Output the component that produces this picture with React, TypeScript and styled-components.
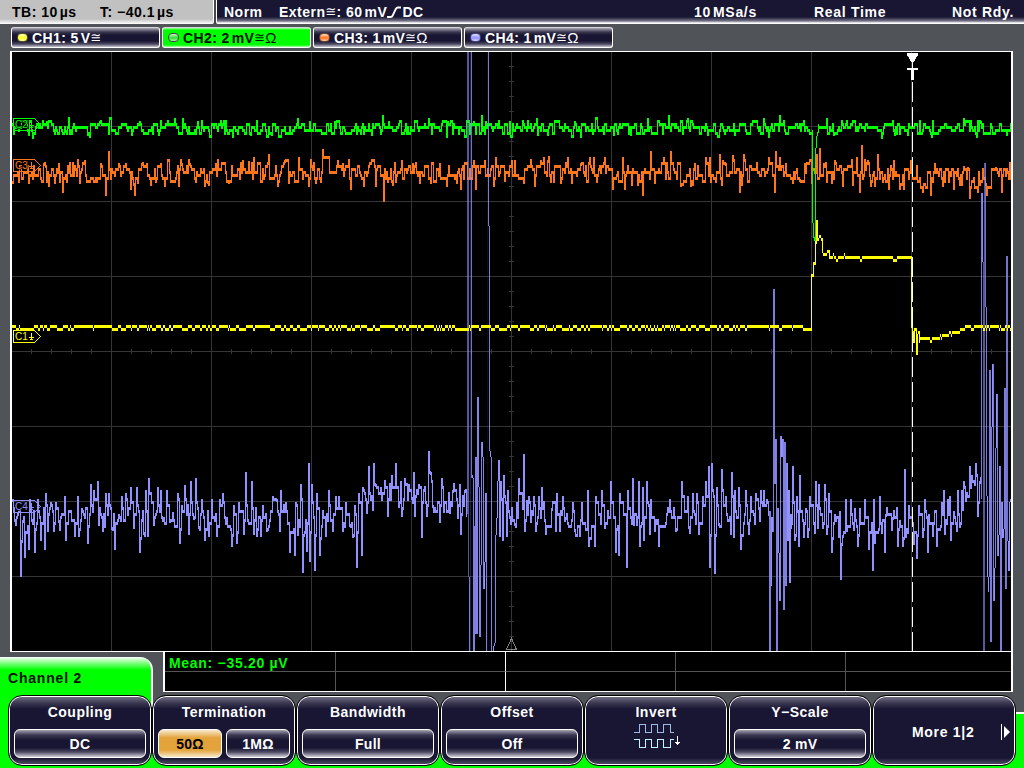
import React from "react";
import styled, { createGlobalStyle, css } from "styled-components";

const GREEN = "#00ff00";
const ORANGE = "#ff751a";
const YELLOW = "#ffff00";
const VIOLET = "#9191ff";
const NAVY = "#191633";
const GREY = "#505458";

const GlobalStyle = createGlobalStyle`
  * { box-sizing: border-box; }
  body { margin: 0; background: ${GREY}; overflow: hidden; }
`;

/* ---------- trace data ---------- */

const LEFT = 12;
const RIGHT = 1011;
const TOP = 52;
const BOTTOM = 651;

type Point = [number, number];
type Span = [number, number, number, number?];

const parse = (text: string): Point[] =>
  text.trim().split(/\s+/).map((p) => p.split(":").map(Number) as Point);

const randomFrom = (seed: number) => () => {
  seed = (seed * 1664525 + 1013904223) % 4294967296;
  return seed / 4294967296;
};

const CH4_PEAKS = parse(`
13:499 16:526 21:577 23:523 25:558 29:550 30:499 32:522 35:553 38:499 41:541 45:550 46:493 48:532 51:502 54:532 56:502
59:523 65:496 66:541 69:510 75:537 78:496 79:537 82:508 88:544 91:484 94:490 98:481 99:526 103:532 106:493 109:493 112:530
115:550 119:514 122:496 126:493 128:513 131:487 134:529 137:487 140:553 144:535 146:490 148:537 149:478 151:492 154:526
158:487 161:490 164:520 167:490 170:523 173:512 178:493 180:544 182:505 185:485 189:535 191:481 194:520 196:478 199:529
202:499 205:541 209:537 212:499 217:537 220:499 223:493 227:520 232:547 234:505 237:544 239:502 244:535 246:472 248:522
252:481 254:535 257:537 261:537 263:505 267:532 270:522 273:496 277:499 280:532 281:490 286:502 290:553 295:556 296:502
298:536 301:484 303:573 307:552 309:463 310:562 312:484 315:571 317:493 320:556 323:510 326:537 329:490 333:532 336:496
339:496 343:532 346:502 350:527 353:538 355:505 357:568 359:493 362:556 363:487 367:514 369:466 373:511 374:463 376:484
381:487 385:480 388:517 390:483 392:475 396:463 399:508 401:481 402:517 405:478 409:484 412:500 414:472 415:517 419:484
422:538 424:489 427:517 429:451 431:472 433:508 440:523 442:478 444:513 450:514 453:490 458:519 460:484 461:535 465:490
467:514 499:460 500:537 501:481 503:541 504:475 507:537 508:490 511:525 515:526 517:502 519:478 524:454 525:532 527:500
529:496 531:523 534:496 536:532 539:496 542:487 546:535 552:508 556:532 557:493 560:532 563:496 566:520 575:532 573:502
580:537 582:502 583:525 588:490 589:547 595:547 596:496 602:490 605:529 608:510 611:481 616:553 619:556 620:493 627:568
628:490 633:478 634:526 637:526 639:481 640:547 643:487 644:541 647:481 650:535 651:499 655:532 659:547 670:499 676:532
682:481 689:529 688:496 693:493 697:493 699:535 703:496 706:481 709:466 710:568 712:463 715:574 717:487 719:526 722:469
726:496 731:535 732:472 734:538 735:490 739:487 741:550 746:490 749:535 751:496 756:493 761:490 764:490 767:499 793:466
795:541 797:496 799:547 800:475 804:538 806:508 808:538 810:496 816:481 818:529 819:484 823:529 825:484 827:535 829:493
832:553 835:514 839:538 840:511 841:580 843:538 846:499 847:532 851:499 855:508 858:547 860:508 865:499 869:550 873:571
874:499 875:544 880:496 885:553 886:514 893:517 898:547 900:520 903:547 905:469 906:538 909:505 914:545 917:559 919:505
923:538 925:499 928:553 929:514 937:547 942:502 944:490 945:535 948:499 950:496 951:541 954:511 957:532 958:490 962:490
963:511 964:481 966:502 970:466 972:475 976:463 978:517 980:481`);

const CH3_PEAKS = parse(`
13:184 19:183 29:184 41:180 44:163 49:187 55:184 63:193 59:163 70:162 73:162 85:160 80:184 90:183 97:183 101:163 106:196
109:151 119:163 126:163 131:190 135:196 138:184 142:163 147:163 151:186 161:163 165:187 171:183 179:187 182:163 190:163
205:187 208:184 216:163 229:184 243:160 249:161 254:157 269:154 278:187 285:160 289:184 299:157 309:187 316:184 323:149
338:160 343:163 351:190 364:187 376:187 384:202 392:183 402:160 413:163 420:184 431:184 440:163 447:187 457:184 461:190
474:160 476:190 485:160 494:187 496:157 505:182 512:160 515:160 524:184 535:187 541:160 544:157 548:160 561:184 568:157
572:184 581:163 590:157 594:157 597:183 605:157 613:190 623:157 625:190 638:186 643:196 651:151 655:184 664:157 671:151
681:187 691:187 695:163 706:157 710:157 716:183 720:154 723:160 726:163 733:155 740:193 744:154 748:183 769:157 775:193
776:151 780:157 786:163 793:184 800:182 805:163 812:184 817:154 820:148 824:163 832:184 835:160 843:187 853:186 857:157
860:193 862:145 868:160 871:187 875:187 878:154 889:190 894:160 900:190 904:190 911:160 923:193 931:196 935:163 943:187
954:190 964:166 970:199 968:167 978:193 987:196 996:167 1002:193 1007:168 1010:162`);

const CH2_PEAKS = parse(`
29:136 33:139 47:121 66:133 88:136 100:121 132:136 140:121 159:136 175:118 183:118 198:121 225:135 251:136 272:136 298:118
310:121 335:121 372:136 383:115 389:121 429:118 448:121 474:121 482:115 486:121 510:121 537:118 538:136 548:136 575:121
614:136 631:136 648:118 669:115 688:118 708:136 735:136 764:118 780:115 827:118 834:136 882:139 895:136 908:136 964:118
981:121 1007:136`);

interface Noise {
  peaks: Point[];
  centre: (x: number) => number;
  swing: number;
  change: number;
  drag: number;
  seed: number;
}

/* Samples between the measured peaks wander around the centre in 3px steps. */
const makeSeries = ({ peaks, centre, swing, change, drag, seed }: Noise): number[] => {
  const random = randomFrom(seed);
  const peakAt = new Map(peaks.map(([x, y]) => [x - 1, y > centre(x) ? y - 3 : y]));
  const series: number[] = [];
  let value = centre(LEFT);
  for (let x = LEFT; x < RIGHT; x++) {
    const peak = peakAt.get(x);
    if (peak !== undefined) value = peak;
    else if (peakAt.has(x - 1) || random() < change) {
      const target = centre(x) + (random() + random() - 1) * swing;
      value = Math.round((target * (1 - drag) + value * drag) / 3) * 3;
    }
    series.push(value);
  }
  return series;
};

const spansOf = (series: number[], skip: [number, number][] = []): Span[] =>
  series
    .map((y, i): Span => {
      const before = series[Math.max(0, i - 1)];
      return [LEFT + i, Math.min(y, before), Math.max(y, before) + 3];
    })
    .filter(([x]) => !skip.some(([from, to]) => x >= from && x <= to));

const pathOf = (spans: Span[]) =>
  spans.map(([x, top, bottom]) => `M${x} ${top}h1V${bottom}h-1z`).join("");

const ch2 = spansOf(
  makeSeries({ peaks: CH2_PEAKS, centre: () => 126.5, swing: 9, change: 0.6, drag: 0, seed: 11 }),
  [[812, 818]]
).concat([
  [812, 130, 223], [813, 223, 238], [814, 237, 241], [815, 148, 241], [816, 136, 148], [817, 132, 136], [818, 124, 133],
]);

const ch3 = spansOf(
  makeSeries({
    peaks: CH3_PEAKS,
    centre: (x) => (x > 911 ? 175 : 171),
    swing: 15,
    change: 0.62,
    drag: 0.15,
    seed: 29,
  })
);

const ch1Steps = parse(`
811:274 813:262 815:241 816:220 817:238 819:235 821:238 822:250 823:253 827:250 829:256 833:253 834:256 836:259 838:256
844:253 845:256 860:259 862:256 893:259 897:256 911:325 912:331 913:340 914:328 916:352 917:334 918:331 919:340 920:337
930:340 932:337 940:334 941:337 942:334 949:331 951:334 952:331 960:328`);

const ch1 = (() => {
  const random = randomFrom(7);
  const steps = new Map(ch1Steps);
  const series: number[] = [];
  let value = 325;
  for (let x = LEFT; x < RIGHT; x++) {
    if (steps.has(x)) value = steps.get(x)!;
    else if (x < 811 || x > 962) {
      if (random() < (value === 325 ? 0.2 : 0.3)) value = value === 325 ? 328 : 325;
    }
    series.push(value);
  }
  return series.map((y, i): Span => {
    const before = series[Math.max(0, i - 1)];
    if (Math.abs(y - before) <= 3) return [LEFT + i, y, y + 3];
    return [LEFT + i, Math.min(y, before), Math.max(y, before) + 3];
  });
})();

const BURSTS: Span[] = [
  [467, 52, 514, 0.6], [468, 52, 577, 0.6], [469, 577, 651, 0.85], [470, 52, 651, 0.22], [471, 52, 478, 0.78],
  [472, 475, 478], [473, 478, 651, 0.88], [474, 526, 651, 0.88], [475, 457, 634, 0.88], [476, 457, 634, 0.9],
  [477, 397, 634, 0.9], [478, 397, 487, 0.9], [479, 487, 637, 0.9], [480, 565, 637, 0.9], [481, 442, 565, 0.9],
  [482, 442, 457], [483, 457, 589, 0.9], [484, 562, 589], [485, 493, 562], [486, 493, 651, 0.88], [487, 52, 651, 0.08],
  [488, 52, 226, 0.85], [489, 226, 451, 0.85], [490, 451, 457], [491, 457, 651, 0.88], [493, 646, 651], [494, 643, 646],
  [495, 535, 643, 0.9], [496, 518, 535], [497, 481, 518], [498, 460, 481],
  [769, 511, 651, 0.88], [770, 511, 651, 0.88], [771, 517, 586], [772, 517, 532], [773, 289, 532, 0.85],
  [774, 289, 484, 0.85], [775, 439, 484, 0.9], [776, 439, 651, 0.88], [777, 508, 651, 0.88], [778, 508, 553],
  [779, 553, 601], [780, 436, 601, 0.9], [781, 436, 457], [782, 439, 457], [783, 439, 610, 0.88], [784, 442, 610, 0.88],
  [785, 442, 586, 0.88], [786, 463, 586, 0.9], [787, 463, 541], [788, 490, 541], [789, 490, 583], [790, 514, 583],
  [791, 514, 529], [981, 193, 499, 0.85], [982, 193, 262, 0.95], [983, 262, 651, 0.6], [984, 163, 651, 0.6],
  [985, 163, 307, 0.78], [986, 307, 496, 0.85], [987, 496, 577], [988, 577, 592], [989, 370, 577, 0.85],
  [990, 370, 642, 0.85], [991, 427, 642, 0.85], [992, 364, 427], [993, 364, 601, 0.85], [994, 568, 601],
  [995, 448, 568, 0.9], [996, 394, 448], [997, 394, 556, 0.88], [998, 535, 556], [999, 466, 535], [1000, 466, 651, 0.88],
  [1001, 502, 651, 0.88], [1002, 502, 538], [1003, 529, 538], [1004, 388, 529, 0.88], [1005, 388, 589, 0.85],
  [1006, 256, 589, 0.8], [1007, 256, 541, 0.8], [1008, 541, 571], [1009, 502, 571], [1010, 499, 502],
];

const ch4Centre = (x: number) => {
  if (x > 362 && x < 467) return 495;
  if (x > 960) return 490;
  if (x > 780) return 521;
  return 515;
};

const ch4 = spansOf(
  makeSeries({ peaks: CH4_PEAKS, centre: ch4Centre, swing: 22, change: 0.55, drag: 0.4, seed: 5 }),
  [[467, 498], [769, 791], [981, 1010]]
);

/* ---------- status bar ---------- */

const font = css`
  font-family: "Liberation Sans", Arial, sans-serif;
  font-size: 14px;
  font-weight: 700;
  line-height: 16px;
  white-space: pre;
`;

const Screen = styled.main`
  ${font}
  width: 1024px;
  height: 768px;
  display: flex;
  flex-direction: column;
  background: ${GREY};
  color: #fff;
  overflow: hidden;
`;

const StatusBar = styled.header`
  display: flex;
  height: 24px;
  gap: 2px;
  background: #45474d;
`;

const TimePane = styled.div`
  display: grid;
  grid-template-columns: 88px 1fr;
  width: 214px;
  padding: 4px 0 0 12px;
  color: #000;
  background: linear-gradient(#c1c1c1 19px, #fff 24px);
  border-right: 1px solid #fff;
  border-bottom-right-radius: 2px;
`;

const TriggerPane = styled.div`
  flex: 1;
  display: grid;
  grid-template-columns: 55px 415px 120px 138px 1fr;
  padding: 4px 0 0 7px;
  background: linear-gradient(${NAVY} 17px, #77758a 21px, #fff 23px);
  border-left: 1px solid #fff;
  border-bottom-left-radius: 2px;
`;

const Reading = styled.span<{ $spacing?: number }>`
  display: flex;
  letter-spacing: ${(p) => p.$spacing ?? 0.5}px;
`;

const Unit = styled.span`
  margin-left: 2px;
`;

const Approx = styled.span`
  font-family: "DejaVu Sans", sans-serif;
  font-weight: 400;
  font-size: 13px;
  letter-spacing: 0;
`;

const ThinOhm = styled.span`
  font-weight: 400;
  font-size: 15px;
  letter-spacing: 0;
`;

const EdgeGlyph = styled.svg`
  margin: 1px 0 0 -1px;
`;

const RisingEdge = () => (
  <EdgeGlyph width="16" height="14" viewBox="0 0 16 14">
    <path d="M1 12H4.5Q6 12 6.7 10.5L9.8 4Q10.5 2.5 12 2.5H15" fill="none" stroke="#fff" strokeWidth="1.8" />
  </EdgeGlyph>
);

/* ---------- channel bar ---------- */

const ChannelBar = styled.nav`
  display: flex;
  gap: 2px;
  height: 27px;
  padding: 3px 0 3px 11px;
`;

const ChannelButton = styled.div<{ $active?: boolean }>`
  display: flex;
  align-items: center;
  width: 149px;
  height: 21px;
  padding: 0 0 0 5px;
  border: 1px solid #fff;
  border-top-color: #d6d6dc;
  border-radius: 3px;
  color: ${(p) => (p.$active ? "#001000" : "#fff")};
  background: ${(p) =>
    p.$active
      ? `linear-gradient(#b0ffb0, ${GREEN} 2px, ${GREEN} 17px, #b0ffb0)`
      : `linear-gradient(#aaa9b5, #3b3850 4px, ${NAVY} 7px, ${NAVY} 13px, #4a4860 16px, #c6c5cf)`};
`;

const Lamp = styled.i<{ $color: string; $ring: string }>`
  width: 11px;
  height: 9px;
  margin-right: 4px;
  border: 1px solid ${(p) => p.$ring};
  border-radius: 4px;
  background: linear-gradient(#fff -20%, ${(p) => p.$color} 55%, #fff 130%);
`;

/* ---------- plot ---------- */

const Plot = styled.section`
  width: 1003px;
  height: 601px;
  margin-left: 10px;
  border: solid #fff;
  border-width: 1px 2px 1px 2px;
  background: #000;
  svg { display: block; }
`;

const TagText = styled.text`
  font-family: "Liberation Sans", Arial, sans-serif;
  font-size: 10px;
  font-weight: 400;
  paint-order: stroke;
`;

const ChannelTag = ({ name, y, color }: { name: string; y: number; color: string }) => (
  <g>
    <path d={`M13.5 ${y + 0.5}h21l6 6l-6 6h-21z`} fill="none" stroke={color} />
    <TagText x="15" y={y + 10} fill={color} stroke="#000" strokeWidth="1.5">
      {name}
    </TagText>
    <path d={`M31.5 ${y + 3}v6M29 ${y + 7.5}h5M30 ${y + 9.5}h3`} fill="none" stroke={color} />
  </g>
);

const range = (from: number, to: number, step: number) => {
  const out: number[] = [];
  for (let v = from; v <= to; v += step) out.push(v);
  return out;
};

const gridPath = [
  ...range(111, 911, 100).map((x) => `M${x} ${TOP}h1V${BOTTOM}h-1z`),
  ...range(126, 576, 75).map((y) => `M${LEFT} ${y}H${RIGHT}v1H${LEFT}z`),
  ...range(31, 991, 20).map((x) => `M${x} 349h1v5h-1z`),
  ...range(66, 636, 15).map((y) => `M509 ${y}h5v1h-5z`),
].join("");

const dashPath = range(82, 632, 25)
  .map((y) => `M912 ${y}h1V${Math.min(y + 20, BOTTOM)}h-1z`)
  .join("");

const Waveforms = () => (
  <svg width="999" height="599" viewBox="12 52 999 599" shapeRendering="crispEdges">
    <path d={gridPath} fill="#353535" />
    <path d="M506.5 649.5L511.5 638.5L516.5 649.5z" fill="none" stroke="#858585" />
    <path d={pathOf(ch3)} fill={ORANGE} />
    <path d={pathOf(ch2)} fill={GREEN} />
    <path d={pathOf(ch4)} fill={VIOLET} />
    {BURSTS.map(([x, top, bottom, level = 1]) => (
      <rect key={x} x={x} y={top} width="1" height={bottom - top} fill={VIOLET} opacity={level} />
    ))}
    <path d={pathOf(ch1)} fill={YELLOW} />
    <path d={dashPath} fill="#fff" />
    <path d="M907 53h11v2l-5 8v5h5v2h-4v10h-3v-10h-4v-2h5v-5l-5-8z" fill="#fff" />
    <ChannelTag name="C2" y={118} color={GREEN} />
    <ChannelTag name="C3" y={159} color={ORANGE} />
    <ChannelTag name="C1" y={330} color={YELLOW} />
    <ChannelTag name="C4" y={500} color={VIOLET} />
  </svg>
);

/* ---------- measurements ---------- */

const ResultRow = styled.section`
  display: flex;
  align-items: flex-end;
  height: 43px;
`;

const MenuTitle = styled.h2`
  ${font}
  width: 153px;
  height: 38px;
  margin: 0;
  padding: 13px 0 0 8px;
  color: #001000;
  letter-spacing: 0.8px;
  background: linear-gradient(#fff, #a8ffa8 4px, ${GREEN} 13px);
  border-right: 2px solid #fff;
  border-top-right-radius: 13px;
`;

const ResultTable = styled.div`
  display: grid;
  grid-template-columns: 171px 170px 170px 170px 1fr;
  grid-template-rows: 20px 19px;
  align-self: flex-start;
  width: 850px;
  height: 40px;
  margin-left: 10px;
  border: solid #fff;
  border-width: 0 2px 1px 2px;
  background: #000;
`;

const Cell = styled.div<{ $line: string; $lower?: boolean }>`
  border-right: 1px solid ${(p) => p.$line};
  border-bottom: ${(p) => (p.$lower ? "none" : "1px solid #555")};
  padding: 3px 0 0 4px;
  color: ${GREEN};
  letter-spacing: 0.7px;
`;

const LINES = ["#555", "#fff", "#555", "#555", "transparent"];

/* ---------- soft key menu ---------- */

const Menu = styled.nav`
  display: flex;
  height: 73px;
  padding-left: 8px;
  background:
    linear-gradient(#fff, #fff) 151px 0 / 2px 12px no-repeat,
    linear-gradient(${GREEN}, ${GREEN}) 0 0 / 151px 100% no-repeat,
    linear-gradient(#fff, #fff) 1016px 17px / 8px 2px no-repeat,
    linear-gradient(${GREEN}, ${GREEN}) 1016px 19px / 8px 100% no-repeat,
    linear-gradient(${GREEN}, ${GREEN}) 0 59px / 100% 14px no-repeat;
`;

const SoftKey = styled.div`
  width: 144px;
  height: 71px;
  display: flex;
  flex-direction: column;
  align-items: center;
  padding: 8px 4px 0;
  border: 1px solid #000;
  border-radius: 14px;
  box-shadow: inset 0 0 0 1px #fff;
  background: linear-gradient(#77758a, #3b3852 7px, ${NAVY} 13px, ${NAVY} 62px, #55536a);
`;

const KeyLabel = styled.div`
  letter-spacing: 0.5px;
`;

const Values = styled.div`
  display: flex;
  gap: 4px;
  width: 132px;
  margin-top: 9px;
`;

const Value = styled.div<{ $selected?: boolean }>`
  flex: 1;
  height: 29px;
  display: flex;
  align-items: center;
  justify-content: center;
  border: 1px solid #fff;
  border-radius: 6px;
  letter-spacing: 0.3px;
  color: ${(p) => (p.$selected ? "#000" : "#fff")};
  background: ${(p) =>
    p.$selected
      ? "linear-gradient(#f8e8cc, #e3a33b 8px, #e3a33b 20px, #f8e8cc)"
      : `linear-gradient(#a5a4b2, #3b3852 5px, ${NAVY} 10px, ${NAVY} 18px, #4b4962 22px, #d0cfd8)`};
`;

const MoreRow = styled.div`
  display: flex;
  align-items: center;
  align-self: stretch;
  height: 55px;
  padding-left: 35px;
  letter-spacing: 0.7px;
  svg { margin-left: auto; }
`;

const InvertGlyph = styled.svg`
  margin: 3px 0 0 3px;
`;

const InvertIcon = () => (
  <InvertGlyph width="48" height="26" viewBox="0 0 48 26" fill="none" shapeRendering="crispEdges">
    <path d="M0 9.5H5.5V1.5H11.5V9.5H17.5V1.5H23.5V9.5H29.5V1.5H36.5V9.5H40" stroke="#9dbbe6" />
    <path d="M0 16.5H5.5V24.5H11.5V16.5H17.5V24.5H23.5V16.5H29.5V24.5H36.5V16.5H40" stroke="#c4f4ff" />
    <path d="M43.5 13V22M41 19.5H46M42 20.5H45" stroke="#fff" />
  </InvertGlyph>
);

const Key = ({ label, values }: { label: string; values: string[] }) => (
  <SoftKey>
    <KeyLabel>{label}</KeyLabel>
    <Values>
      {values.map((v, i) => (
        <Value key={v} $selected={values.length > 1 && i === 0}>
          {v}
        </Value>
      ))}
    </Values>
  </SoftKey>
);

const CHANNELS = [
  { name: "CH1:", value: "5", unit: "V", color: "#ffff20", ring: "#505020", ohm: false },
  { name: "CH2:", value: "2", unit: "mV", color: "#30e030", ring: "#404840", ohm: true },
  { name: "CH3:", value: "1", unit: "mV", color: "#ff751a", ring: "#604030", ohm: true },
  { name: "CH4:", value: "1", unit: "mV", color: "#9191ff", ring: "#404080", ohm: true },
];

export default function App() {
  return (
    <Screen>
      <GlobalStyle />
      <StatusBar>
        <TimePane>
          <Reading>TB: 10<Unit>µs</Unit></Reading>
          <Reading>T: −40.1<Unit>µs</Unit></Reading>
        </TimePane>
        <TriggerPane>
          <Reading>Norm</Reading>
          <Reading>
            Extern<Approx>≅</Approx>: 60<Unit>mV</Unit><RisingEdge />DC
          </Reading>
          <Reading $spacing={0.7}>10<Unit>MSa/s</Unit></Reading>
          <Reading $spacing={0.7}>Real Time</Reading>
          <Reading $spacing={0.7}>Not Rdy.</Reading>
        </TriggerPane>
      </StatusBar>

      <ChannelBar>
        {CHANNELS.map((c) => (
          <ChannelButton key={c.name} $active={c.name === "CH2:"}>
            <Lamp $color={c.color} $ring={c.ring} />
            <Reading $spacing={0.4}>
              {c.name} {c.value}<Unit>{c.unit}</Unit>
              <Approx>≅</Approx>
              {c.ohm && <ThinOhm>Ω</ThinOhm>}
            </Reading>
          </ChannelButton>
        ))}
      </ChannelBar>

      <Plot>
        <Waveforms />
      </Plot>

      <ResultRow>
        <MenuTitle>Channel 2</MenuTitle>
        <ResultTable>
          {LINES.map((line, i) => (
            <Cell key={i} $line={line}>{i === 0 ? "Mean: −35.20 µV" : null}</Cell>
          ))}
          {LINES.map((line, i) => (
            <Cell key={i} $line={line} $lower />
          ))}
        </ResultTable>
      </ResultRow>

      <Menu>
        <Key label="Coupling" values={["DC"]} />
        <Key label="Termination" values={["50Ω", "1MΩ"]} />
        <Key label="Bandwidth" values={["Full"]} />
        <Key label="Offset" values={["Off"]} />
        <SoftKey>
          <KeyLabel>Invert</KeyLabel>
          <InvertIcon />
        </SoftKey>
        <Key label="Y−Scale" values={["2 mV"]} />
        <SoftKey>
          <MoreRow>
            More 1|2
            <svg width="10" height="16" viewBox="0 0 10 16">
              <path d="M0.5 0V16" stroke="#fff" />
              <path d="M3 2L9 8L3 14z" fill="#fff" />
            </svg>
          </MoreRow>
        </SoftKey>
      </Menu>
    </Screen>
  );
}
